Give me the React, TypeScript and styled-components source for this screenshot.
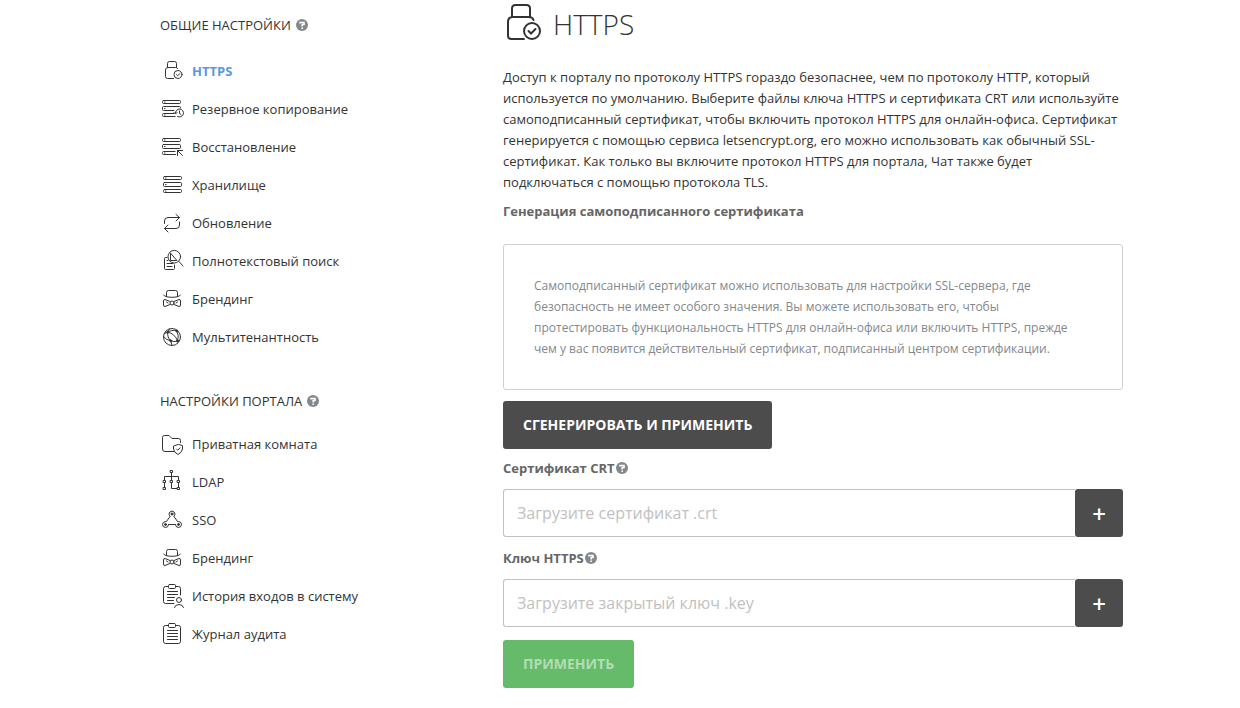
import React from 'react';
import styled, { createGlobalStyle } from 'styled-components';

const GlobalStyle = createGlobalStyle`
  * { box-sizing: border-box; }
  body {
    margin: 0;
    background: #fff;
    color: #333;
    font-family: 'Open Sans', 'Noto Sans', sans-serif;
    font-size: 13px;
  }
`;

const Page = styled.div`
  display: grid;
  grid-template-columns: 343px minmax(0, 1fr);
  padding: 0 117px 20px 160px;
`;

const Sidebar = styled.nav`
  padding-top: 15px;
`;

const Section = styled.section`
  margin-bottom: 35px;
`;

const SectionTitle = styled.h2<{ $gap: number }>`
  display: flex;
  align-items: center;
  gap: 5px;
  margin: 0 0 ${(p) => p.$gap}px;
  font-size: 13px;
  line-height: 20px;
  font-weight: 400;
  text-transform: uppercase;
`;

const MenuList = styled.ul`
  margin: 0;
  padding: 0;
  list-style: none;
`;

const MenuLink = styled.a<{ $active?: boolean }>`
  display: flex;
  align-items: center;
  gap: 8px;
  height: 38px;
  color: ${(p) => (p.$active ? '#5b96e2' : '#333')};
  font-weight: ${(p) => (p.$active ? 700 : 400)};
  line-height: 20px;
  text-decoration: none;
`;

const MenuIcon = styled.svg`
  flex: none;
  width: 24px;
  height: 24px;
  margin-bottom: 2px;
  overflow: visible;
  fill: none;
  stroke: #333;
  stroke-linecap: round;
  stroke-linejoin: round;
`;

const Main = styled.main`
  min-width: 0;
`;

const Title = styled.h1`
  display: flex;
  align-items: center;
  gap: 8px;
  height: 48px;
  margin: 0 0 19px;
  font-size: 28px;
  font-weight: 300;
`;

const TitleIcon = styled.svg`
  flex: none;
  width: 42px;
  height: 48px;
  fill: none;
  stroke: #333;
  stroke-width: 2;
  stroke-linecap: round;
`;

const Intro = styled.p`
  margin: 0;
  line-height: 21px;
`;

const Subtitle = styled.h3`
  margin: 8px 0 22px;
  color: #666;
  font-size: 13px;
  line-height: 21px;
  font-weight: 700;
`;

const Notice = styled.div`
  margin-bottom: 11px;
  padding: 30px;
  border: 1px solid #d1d1d1;
  border-radius: 3px;
  color: #83888d;
  font-size: 12px;
  line-height: 21px;
`;

const Button = styled.button<{ $primary?: boolean }>`
  display: block;
  height: 48px;
  margin: ${(p) => (p.$primary ? '13px 0 0' : '0')};
  padding: 0 20px 2px;
  border: 0;
  border-radius: 3px;
  background: ${(p) => (p.$primary ? '#66bb6a' : '#4c4c4c')};
  color: ${(p) => (p.$primary ? '#b2ddb4' : '#fff')};
  font: 700 14px 'Open Sans', 'Noto Sans', sans-serif;
  text-transform: uppercase;
`;

const Field = styled.div`
  margin-bottom: 11px;
`;

const FieldHead = styled.div`
  display: flex;
  align-items: center;
  gap: 1px;
  height: 20px;
  margin: 9px 0 11px;
  color: #666;
  font-weight: 700;
`;

const FileRow = styled.div`
  display: flex;
  height: 48px;
`;

const FileInput = styled.input`
  flex: 1;
  min-width: 0;
  padding: 0 13px;
  border: 1px solid #c1c1c1;
  border-right: 0;
  border-radius: 3px 0 0 3px;
  background: #fff;
  font: 400 16px 'Open Sans', 'Noto Sans', sans-serif;
  &::placeholder { color: #c1c1c1; opacity: 1; }
`;

const AddButton = styled.button`
  width: 48px;
  padding: 0;
  border: 0;
  border-radius: 3px;
  background: #4c4c4c;
  color: #fff;
  font: 600 24px 'Open Sans', 'Noto Sans', sans-serif;
`;

const HelpButton = styled.button`
  width: 12px;
  height: 12px;
  padding: 0;
  border: 0;
  background: none;
  svg { display: block; }
`;

function Help() {
  return (
    <HelpButton type="button" aria-label="Справка">
      <svg width="12" height="12" viewBox="0 0 12 12" fill="none">
        <circle cx="6" cy="6" r="6" fill="#83888d" />
        <path d="M4 4.5V3.5h4v2H6.2V7.5M6.2 8.5v1.5" stroke="#fff" strokeWidth="1.6" />
      </svg>
    </HelpButton>
  );
}

const icons: Record<string, React.ReactNode> = {
  lock: (
    <>
      <path d="M7.5 9.5V5.5Q7.5 3.5 9.5 3.5H14.5Q16.5 3.5 16.5 5.5V9.5M17.5 10.5Q17 9.5 15.500 9.500H8Q5.500 9.500 5.500 12V18.500Q5.500 20.500 7.500 20.500H13.500" />
      <circle cx="18" cy="16.500" r="4" />
      <path d="M16.500 16.500 17.700 17.700 20 15.500" />
    </>
  ),
  backup: (
    <>
      <rect x="2.500" y="4.500" width="18" height="3" rx="1" />
      <path d="M20.500 12V11.500Q20.500 10.500 19.500 10.500H3.500Q2.500 10.500 2.500 11.500V13.500Q2.500 14.500 3.500 14.500H14M14 17.500H3.500Q2.500 17.500 2.500 18.500V19.500Q2.500 20.500 3.500 20.500H15M4.500 6H5M4.500 12.500H5M4.500 19H5" />
      <path d="M15.500 17.500A4 4 0 1 1 17.500 20.500M14 16.500 15.500 18 17 16.500M19.500 15V17.500L21 18.500" />
    </>
  ),
  restore: (
    <>
      <rect x="2.500" y="4.500" width="18" height="3" rx="1" />
      <rect x="2.500" y="10.500" width="18" height="4" rx="1" />
      <path d="M15 17.500H3.500Q2.500 17.500 2.500 18.500V19.500Q2.500 20.500 3.500 20.500H15.500M4.500 6H5M4.500 12.500H5M4.500 19H5M17.500 21.500V16.500H22.500M17.500 16.500 22.500 21.500" />
    </>
  ),
  storage: (
    <>
      <rect x="3.500" y="4.500" width="18" height="3" rx="1" />
      <rect x="3.500" y="10.500" width="18" height="4" rx="1" />
      <rect x="3.500" y="17.500" width="18" height="3" rx="1" />
      <path d="M5.500 6H6M5.500 12.500H6M5.500 19H6" />
    </>
  ),
  update: (
    <path d="M4.500 13.500V11Q4.500 7.500 8 7.500H19.500M16 4.500 19.500 7.500 16 11M19.500 12V15Q19.500 18.500 16 18.500H4.500M8 15 4.500 18.500 8 22" />
  ),
  search: (
    <>
      <circle cx="14.300" cy="8.700" r="6.300" />
      <path d="M19 13.500 23 18M7 9.500H5.500Q4.500 9.500 4.500 10.500V20.500Q4.500 21.500 5.500 21.500H13.500Q14.500 21.500 14.500 20.500V17M10.500 5.500V12.500H16.500ZM7 12.500H8M7 15.500H13M7 18.500H12" />
    </>
  ),
  hat: (
    <>
      <path d="M3.500 9C4.500 12.200 19.500 12.200 20.500 9M6.500 10.500V6.500Q6.500 4.500 8.500 4.500H15.500Q17.500 4.500 17.500 6.500V10.500" />
      <path d="M10 15.500 5 13.500Q3.500 13.200 3.500 15V19Q3.500 20.800 5 20.500L10 18.500M14 15.500 19 13.500Q20.500 13.200 20.500 15V19Q20.500 20.800 19 20.500L14 18.500M6.500 16 8 17M17.500 16 16 17" />
      <circle cx="12" cy="17" r="2" />
    </>
  ),
  globe: (
    <>
      <circle cx="12" cy="13" r="8.500" />
      <path d="M7.700 8.300Q11 5.500 16.700 6.700M7.700 8.300Q7 13.500 10.700 16.700M16.700 6.700Q19.500 11.500 17.700 17M10.700 16.700Q14 18.500 17.700 17M3.500 12.500Q6.500 16.500 10.700 16.700L12 21.500M7.700 8.300Q14 8.500 17.700 17M4.500 9.500 7.700 8.300 9.500 5" />
      <g fill="#333">
        <circle cx="7.700" cy="8.300" r="1" />
        <circle cx="16.700" cy="6.900" r="1" />
        <circle cx="10.700" cy="16.700" r="1" />
        <circle cx="17.500" cy="17" r="1" />
      </g>
    </>
  ),
  folder: (
    <>
      <path d="M14 20.500H5Q2.500 20.500 2.500 18V6.500Q2.500 4.500 4.500 4.500H9L12 7.500H18.500Q20.500 7.500 20.500 9.500V11.500" />
      <path d="M18 13.500 13.500 15V18Q14 21.500 18 23.500Q22 21.500 22.500 18V15Z M16.500 18 17.700 19.200 20 17" />
    </>
  ),
  ldap: (
    <>
      <path d="M11.500 3.500V11M4.500 11V7.500H18.500V11M4.500 13.500V18M18.500 13.500V18M11.500 13.500V19.500H17" />
      <g fill="#fff">
        <rect x="10.500" y="1.500" width="2" height="2" />
        <rect x="3.500" y="11.500" width="2" height="2" />
        <rect x="10.500" y="11.500" width="2" height="2" />
        <rect x="17.500" y="11.500" width="2" height="2" />
        <rect x="3.500" y="18.500" width="2" height="2" />
        <rect x="17.500" y="18.500" width="2" height="2" />
      </g>
    </>
  ),
  sso: (
    <>
      <path d="M10 9.500 6.500 14.500M14 9.500 17.500 14.500M8.500 17.500H15.500" />
      <path d="M9.800 9.200A3 3 0 1 1 14.200 9.200M8.500 18A3 3 0 1 1 5.500 14.500M15.500 18A3 3 0 1 0 18.500 14.500" />
      <g fill="#333">
        <circle cx="12" cy="7" r="1" />
        <circle cx="5.500" cy="17.500" r="1" />
        <circle cx="18.500" cy="17.500" r="1" />
      </g>
    </>
  ),
  history: (
    <>
      <path d="M8.500 3.500H5.500Q3.500 3.500 3.500 5.500V18.500Q3.500 20.500 5.500 20.500H14M16 3.500H18.500Q20.500 3.500 20.500 5.500V12M7.500 8.500H17.500M7.500 11.500H17.500M7.500 14.500H14.500M7.500 17.500H13.500" />
      <rect x="8.500" y="1.500" width="7" height="4" rx="1" />
      <circle cx="19" cy="17" r="2.500" />
      <path d="M14.500 24.500Q15 21.500 19 21.500T23.500 24.500" />
    </>
  ),
  audit: (
    <>
      <path d="M8.500 4.500H5.500Q3.500 4.500 3.500 6.500V20.500Q3.500 22.500 5.500 22.500H18.500Q20.500 22.500 20.500 20.500V6.500Q20.500 4.500 18.500 4.500H16M7.500 9.500H17.500M7.500 12.500H17.500M7.500 15.500H17.500M7.500 18.500H17.500" />
      <rect x="8.500" y="2.500" width="7" height="4" rx="1" />
    </>
  ),
};

type Item = { icon: string; label: string; active?: boolean };

const general: Item[] = [
  { icon: 'lock', label: 'HTTPS', active: true },
  { icon: 'backup', label: 'Резервное копирование' },
  { icon: 'restore', label: 'Восстановление' },
  { icon: 'storage', label: 'Хранилище' },
  { icon: 'update', label: 'Обновление' },
  { icon: 'search', label: 'Полнотекстовый поиск' },
  { icon: 'hat', label: 'Брендинг' },
  { icon: 'globe', label: 'Мультитенантность' },
];

const portal: Item[] = [
  { icon: 'folder', label: 'Приватная комната' },
  { icon: 'ldap', label: 'LDAP' },
  { icon: 'sso', label: 'SSO' },
  { icon: 'hat', label: 'Брендинг' },
  { icon: 'history', label: 'История входов в систему' },
  { icon: 'audit', label: 'Журнал аудита' },
];

function MenuSection({ title, items, gap }: { title: string; items: Item[]; gap: number }) {
  return (
    <Section>
      <SectionTitle $gap={gap}>
        {title}
        <Help />
      </SectionTitle>
      <MenuList>
        {items.map((item) => (
          <li key={item.label}>
            <MenuLink href="#" $active={item.active} aria-current={item.active ? 'page' : undefined}>
              <MenuIcon viewBox="0 0 24 24" aria-hidden="true">{icons[item.icon]}</MenuIcon>
              {item.label}
            </MenuLink>
          </li>
        ))}
      </MenuList>
    </Section>
  );
}

function FileField({ id, label, placeholder }: { id: string; label: string; placeholder: string }) {
  return (
    <Field>
      <FieldHead>
        <label htmlFor={id}>{label}</label>
        <Help />
      </FieldHead>
      <FileRow>
        <FileInput id={id} type="text" placeholder={placeholder} />
        <AddButton type="button">+</AddButton>
      </FileRow>
    </Field>
  );
}

export default function App() {
  return (
    <>
      <GlobalStyle />
      <Page>
        <Sidebar>
          <MenuSection title="Общие настройки" items={general} gap={17} />
          <MenuSection title="Настройки портала" items={portal} gap={14} />
        </Sidebar>
        <Main>
          <Title>
            <TitleIcon viewBox="0 0 42 48" aria-hidden="true">
              <path d="M9 17V8.500Q9 5 12.500 5H23.500Q27 5 27 8.500V17M30.500 20Q29.500 17 26 17H10Q5 17 5 22V35.500Q5 39 8.500 39H21" />
              <circle cx="29" cy="31" r="8" />
              <path d="M25.500 31 28 33.500 32.500 29" />
            </TitleIcon>
            HTTPS
          </Title>
          <Intro>
            Доступ к порталу по протоколу HTTPS гораздо безопаснее, чем по протоколу HTTP, который используется по
            умолчанию. Выберите файлы ключа HTTPS и сертификата CRT или используйте самоподписанный сертификат, чтобы
            включить протокол HTTPS для онлайн-офиса. Сертификат генерируется с помощью сервиса letsencrypt.org, его
            можно использовать как обычный SSL-сертификат. Как только вы включите протокол HTTPS для портала, Чат также
            будет подключаться с помощью протокола TLS.
          </Intro>
          <Subtitle>Генерация самоподписанного сертификата</Subtitle>
          <Notice>
            Самоподписанный сертификат можно использовать для настройки SSL-сервера, где безопасность не имеет особого
            значения. Вы можете использовать его, чтобы протестировать функциональность HTTPS для онлайн-офиса или
            включить HTTPS, прежде чем у вас появится действительный сертификат, подписанный центром сертификации.
          </Notice>
          <Button type="button">Сгенерировать и применить</Button>
          <FileField id="crt" label="Сертификат CRT" placeholder="Загрузите сертификат .crt" />
          <FileField id="key" label="Ключ HTTPS" placeholder="Загрузите закрытый ключ .key" />
          <Button type="button" $primary disabled>Применить</Button>
        </Main>
      </Page>
    </>
  );
}
